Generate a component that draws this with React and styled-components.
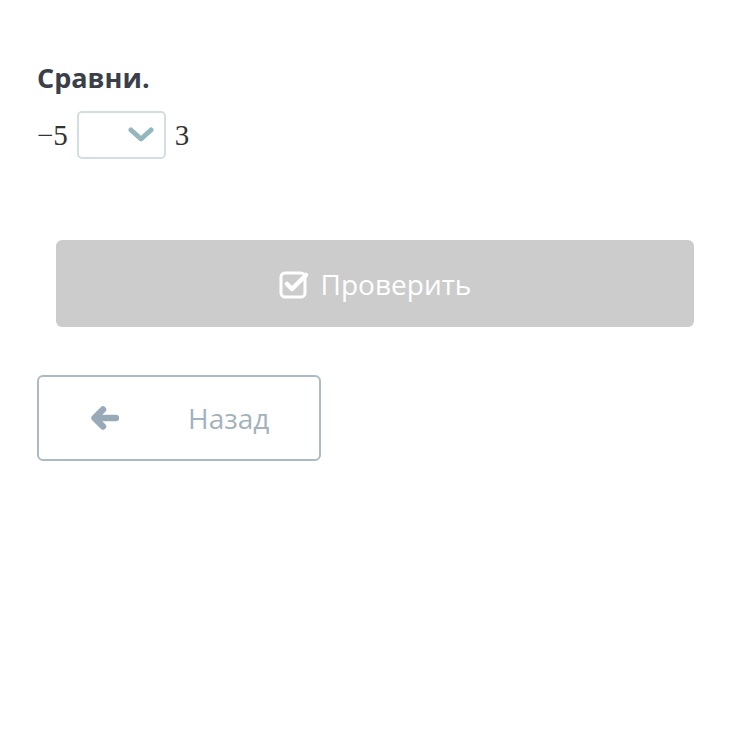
import React from 'react'
import styled, { createGlobalStyle } from 'styled-components'

const Global = createGlobalStyle`
body{margin:0;background:#fff;font-family:"Open Sans",sans-serif;}
`
const Page = styled.div`
padding: 55px 37px 0 37px;
width: 750px;
box-sizing: border-box;
`
const Title = styled.h2`
margin: 0;
font-size: 27px;
font-weight: 700;
color: #3b3f4a;
line-height: 46px;
`
const Row = styled.div`
display: flex;
align-items: center;
gap: 9px;
margin-top: 10px;
font-family: "Liberation Serif", serif;
font-size: 29px;
color: #333;
`
const Select = styled.div`
width: 89px;
height: 48px;
box-sizing: border-box;
border: 2px solid #d3dee2;
border-radius: 5px;
display: flex;
align-items: center;
justify-content: flex-end;
padding-right: 10px;
`
const Check = styled.button`
margin: 81px 19px 0 19px;
width: calc(100% - 38px);
height: 87px;
border: none;
border-radius: 6px;
background: #cccccc;
color: #fff;
font-family: "Open Sans", sans-serif;
font-size: 28px;
display: flex;
align-items: center;
justify-content: center;
gap: 12px;
padding: 0;
`
const Back = styled.button`
margin-top: 48px;
width: 284px;
height: 86px;
box-sizing: border-box;
border: 2px solid #adbac3;
border-radius: 6px;
background: #fff;
color: #a3b2bd;
font-family: "Open Sans", sans-serif;
font-size: 28px;
display: flex;
align-items: center;
padding: 0 0 0 52px;
`
const Label = styled.span`
margin-left: 69px;
`

export default function App() {
  return (
    <Page>
      <Global />
      <Title>Сравни.</Title>
      <Row>
        <span>−5</span>
        <Select>
          <svg width="26" height="18" viewBox="0 0 26 18">
            <path d="M3 4 L13 13 L23 4" fill="none" stroke="#93b6bf" strokeWidth="5" strokeLinecap="round" strokeLinejoin="round" />
          </svg>
        </Select>
        <span>3</span>
      </Row>
      <Check>
        <svg width="30" height="30" viewBox="0 0 30 30">
          <rect x="2" y="4" width="24" height="24" rx="4" fill="none" stroke="#fff" strokeWidth="3" />
          <path d="M8 15 L13 20 L27 6" fill="none" stroke="#fff" strokeWidth="4.5" strokeLinecap="round" strokeLinejoin="round" />
        </svg>
        <span>Проверить</span>
      </Check>
      <Back>
        <svg width="28" height="24" viewBox="0 0 28 24">
          <path d="M12 3.5 L3.5 12 L12 20.5 M5 12 H25" fill="none" stroke="#98aab8" strokeWidth="6.5" strokeLinecap="round" strokeLinejoin="round" />
        </svg>
        <Label>Назад</Label>
      </Back>
    </Page>
  )
}
